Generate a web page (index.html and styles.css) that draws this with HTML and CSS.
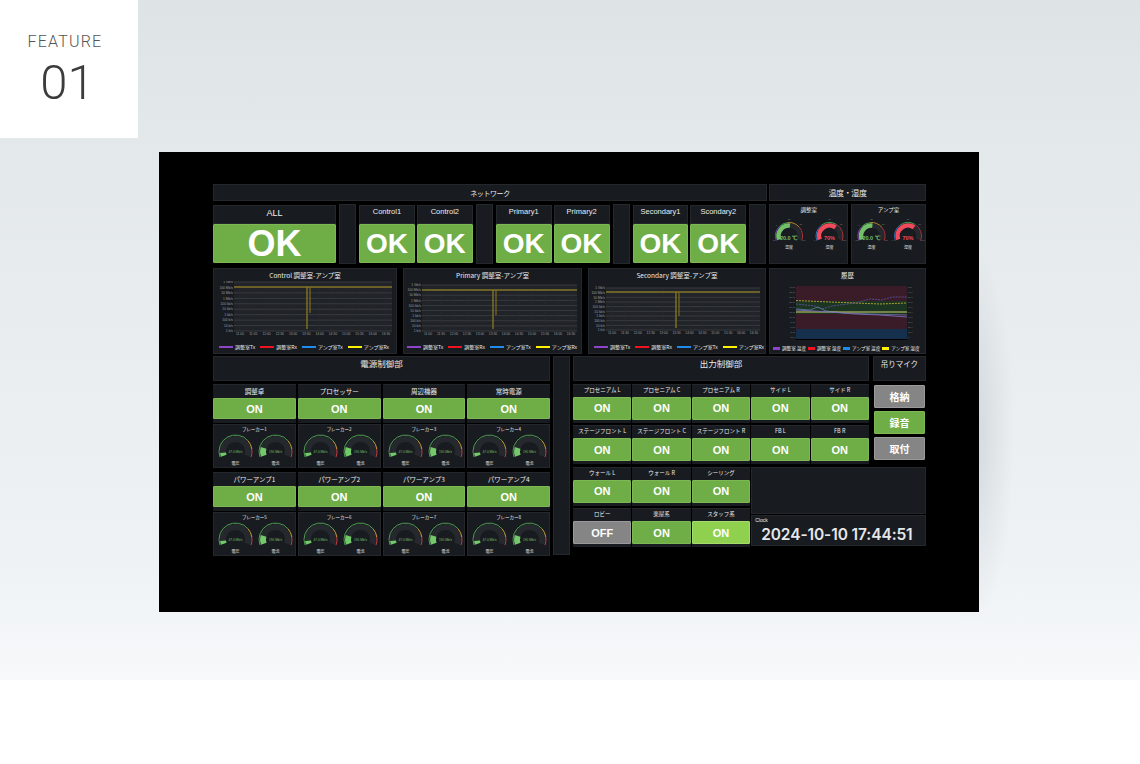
FILE: index.html
```html
<!DOCTYPE html>
<html lang="ja">
<head>
  <meta charset="UTF-8">
  <meta name="viewport" content="width=device-width, initial-scale=1.0">
  <title>Feature 01</title>
  <link rel="stylesheet" href="styles.css">
</head>
<body>
  <section class="hero">
    <div class="feature">
      <p class="feature-label">FEATURE</p>
      <p class="feature-num">01</p>
    </div>

    <div class="screen">
      <div class="board">

        <div class="row row-heads">
          <div class="panel head head-net">ネットワーク</div>
          <div class="panel head head-temp">温度・湿度</div>
        </div>

        <div class="row row-net">
          <div class="status status-all">
            <div class="panel status-name">ALL</div>
            <div class="ok">OK</div>
          </div>
          <div class="panel spacer"></div>
          <div class="net-group">
            <div class="status">
              <div class="panel status-name">Control1</div>
              <div class="ok">OK</div>
            </div>
            <div class="status">
              <div class="panel status-name">Control2</div>
              <div class="ok">OK</div>
            </div>
          </div>
          <div class="panel spacer"></div>
          <div class="net-group">
            <div class="status">
              <div class="panel status-name">Primary1</div>
              <div class="ok">OK</div>
            </div>
            <div class="status">
              <div class="panel status-name">Primary2</div>
              <div class="ok">OK</div>
            </div>
          </div>
          <div class="panel spacer"></div>
          <div class="net-group">
            <div class="status">
              <div class="panel status-name">Secondary1</div>
              <div class="ok">OK</div>
            </div>
            <div class="status">
              <div class="panel status-name">Scondary2</div>
              <div class="ok">OK</div>
            </div>
          </div>
          <div class="panel spacer"></div>
          <div class="panel climate climate-a">
            <p class="climate-title">調整室</p>
            <svg class="climate-svg" data-left="19" data-right="59.5"></svg>
          </div>
          <div class="panel climate climate-b">
            <p class="climate-title">アンプ室</p>
            <svg class="climate-svg" data-left="19.5" data-right="56"></svg>
          </div>
        </div>

        <div class="row row-charts">
          <div class="chart-group">
            <div class="panel chart chart-control">
              <p class="chart-title">Control 調整室-アンプ室</p>
              <svg class="plot" data-x0="20" data-x1="178" data-top="1" data-line="6" data-bottom="50" data-s1="93" data-s2="96" data-s2y="32"></svg>
              <div class="legend">
                <span class="key key-purple">調整室Tx</span>
                <span class="key key-red">調整室Rx</span>
                <span class="key key-blue">アンプ室Tx</span>
                <span class="key key-yellow">アンプ室Rx</span>
              </div>
            </div>
            <div class="panel chart chart-primary">
              <p class="chart-title">Primary 調整室-アンプ室</p>
              <svg class="plot" data-x0="18" data-x1="173" data-top="4" data-line="9" data-bottom="50" data-s1="89" data-s2="92" data-s2y="34"></svg>
              <div class="legend">
                <span class="key key-purple">調整室Tx</span>
                <span class="key key-red">調整室Rx</span>
                <span class="key key-blue">アンプ室Tx</span>
                <span class="key key-yellow">アンプ室Rx</span>
              </div>
            </div>
            <div class="panel chart chart-secondary">
              <p class="chart-title">Secondary 調整室-アンプ室</p>
              <svg class="plot" data-x0="17" data-x1="171" data-top="7" data-line="11" data-bottom="49" data-s1="87" data-s2="90" data-s2y="35"></svg>
              <div class="legend">
                <span class="key key-purple">調整室Tx</span>
                <span class="key key-red">調整室Rx</span>
                <span class="key key-blue">アンプ室Tx</span>
                <span class="key key-yellow">アンプ室Rx</span>
              </div>
            </div>
          </div>
          <div class="panel chart chart-history">
            <p class="chart-title">履歴</p>
            <svg class="history-plot" viewBox="0 0 155 60">
              <rect x="26" y="5" width="111" height="53" fill="#111316"/>
              <rect x="26" y="5" width="111" height="15" fill="#3a1c28"/>
              <rect x="26" y="20" width="111" height="13" fill="#1c3522"/>
              <rect x="26" y="33" width="111" height="15" fill="#3a1c28"/>
              <rect x="26" y="48" width="111" height="10" fill="#14304c"/>
              <path d="M26 58.500H137" stroke="#000" stroke-width="1"/>
              <path d="M26 19.500L60 21L85 22L110 23L137 22" fill="none" stroke="#a89e2e" stroke-width="1" stroke-dasharray="2 1"/>
              <path d="M26 23L45 25L52 28L62 25L85 22L100 18L112 19L122 16L137 16" fill="none" stroke="#5a4f94" stroke-width="0.900" stroke-dasharray="2 1"/>
              <path d="M26 28L40 29L48 26L56 30L75 32L100 33L137 34" fill="none" stroke="#5f7da8" stroke-width="0.800"/>
              <path d="M26 31H60L90 31H137" fill="none" stroke="#cfcf6a" stroke-width="1"/>
              <path d="M26 29L60 31L85 33L110 34L137 36" fill="none" stroke="#7a6bb4" stroke-width="0.900"/>
              <g class="tick tick-fine" text-anchor="end">
                <text x="25" y="7">40.00</text><text x="25" y="12">35.00</text><text x="25" y="17">30.00</text><text x="25" y="22">25.00</text>
                <text x="25" y="27">20.00</text><text x="25" y="32">15.00</text><text x="25" y="37">10.00</text><text x="25" y="42">5.00</text>
                <text x="25" y="47">0.00</text><text x="25" y="52">-5.00</text><text x="25" y="57">-10.0</text>
              </g>
              <g class="tick tick-fine">
                <text x="138" y="7">100</text><text x="138" y="12">90.0</text><text x="138" y="17">80.0</text><text x="138" y="22">70.0</text>
                <text x="138" y="27">60.0</text><text x="138" y="32">50.0</text><text x="138" y="37">40.0</text><text x="138" y="42">30.0</text>
                <text x="138" y="47">20.0</text><text x="138" y="52">10.0</text><text x="138" y="57">0</text>
              </g>
            </svg>
            <div class="legend legend-history">
              <span class="key key-purple">調整室 温度</span>
              <span class="key key-red">調整室 湿度</span>
              <span class="key key-blue">アンプ室 温度</span>
              <span class="key key-yellow">アンプ室 湿度</span>
            </div>
          </div>
        </div>

        <div class="row row-control">
          <div class="power">
            <div class="panel section-title power-title">電源制御部</div>
            <div class="power-cell">
              <div class="panel switch"><p class="switch-name">調整卓</p><div class="btn on">ON</div></div>
              <div class="panel breaker"><p class="breaker-name">ブレーカー1</p><svg class="breaker-svg"></svg></div>
            </div>
            <div class="power-cell">
              <div class="panel switch"><p class="switch-name">プロセッサー</p><div class="btn on">ON</div></div>
              <div class="panel breaker"><p class="breaker-name">ブレーカー2</p><svg class="breaker-svg"></svg></div>
            </div>
            <div class="power-cell">
              <div class="panel switch"><p class="switch-name">周辺機器</p><div class="btn on">ON</div></div>
              <div class="panel breaker"><p class="breaker-name">ブレーカー3</p><svg class="breaker-svg"></svg></div>
            </div>
            <div class="power-cell">
              <div class="panel switch"><p class="switch-name">常時電源</p><div class="btn on">ON</div></div>
              <div class="panel breaker"><p class="breaker-name">ブレーカー4</p><svg class="breaker-svg"></svg></div>
            </div>
            <div class="power-cell">
              <div class="panel switch"><p class="switch-name">パワーアンプ1</p><div class="btn on">ON</div></div>
              <div class="panel breaker"><p class="breaker-name">ブレーカー5</p><svg class="breaker-svg"></svg></div>
            </div>
            <div class="power-cell">
              <div class="panel switch"><p class="switch-name">パワーアンプ2</p><div class="btn on">ON</div></div>
              <div class="panel breaker"><p class="breaker-name">ブレーカー6</p><svg class="breaker-svg"></svg></div>
            </div>
            <div class="power-cell">
              <div class="panel switch"><p class="switch-name">パワーアンプ3</p><div class="btn on">ON</div></div>
              <div class="panel breaker"><p class="breaker-name">ブレーカー7</p><svg class="breaker-svg"></svg></div>
            </div>
            <div class="power-cell">
              <div class="panel switch"><p class="switch-name">パワーアンプ4</p><div class="btn on">ON</div></div>
              <div class="panel breaker"><p class="breaker-name">ブレーカー8</p><svg class="breaker-svg"></svg></div>
            </div>
          </div>

          <div class="panel spacer"></div>

          <div class="output">
            <div class="panel section-title output-title">出力制御部</div>
            <div class="panel section-title mic-title">吊りマイク</div>

            <div class="panel switch small"><p class="switch-name">プロセニアム L</p><div class="btn on">ON</div></div>
            <div class="panel switch small"><p class="switch-name">プロセニアム C</p><div class="btn on">ON</div></div>
            <div class="panel switch small"><p class="switch-name">プロセニアム R</p><div class="btn on">ON</div></div>
            <div class="panel switch small"><p class="switch-name">サイド L</p><div class="btn on">ON</div></div>
            <div class="panel switch small"><p class="switch-name">サイド R</p><div class="btn on">ON</div></div>

            <div class="mic">
              <div class="btn mic-btn off">格納</div>
              <div class="btn mic-btn on">録音</div>
              <div class="btn mic-btn off">取付</div>
            </div>

            <div class="panel switch small"><p class="switch-name">ステージフロント L</p><div class="btn on">ON</div></div>
            <div class="panel switch small"><p class="switch-name">ステージフロント C</p><div class="btn on">ON</div></div>
            <div class="panel switch small"><p class="switch-name">ステージフロント R</p><div class="btn on">ON</div></div>
            <div class="panel switch small"><p class="switch-name">FB L</p><div class="btn on">ON</div></div>
            <div class="panel switch small"><p class="switch-name">FB R</p><div class="btn on">ON</div></div>

            <div class="panel switch small"><p class="switch-name">ウォール L</p><div class="btn on">ON</div></div>
            <div class="panel switch small"><p class="switch-name">ウォール R</p><div class="btn on">ON</div></div>
            <div class="panel switch small"><p class="switch-name">シーリング</p><div class="btn on">ON</div></div>

            <div class="side">
              <div class="panel side-blank"></div>
              <div class="panel clock">
                <p class="clock-name">Clock</p>
                <p class="clock-time">2024-10-10 17:44:51</p>
              </div>
            </div>

            <div class="panel switch small"><p class="switch-name">ロビー</p><div class="btn off">OFF</div></div>
            <div class="panel switch small"><p class="switch-name">楽屋系</p><div class="btn on">ON</div></div>
            <div class="panel switch small"><p class="switch-name">スタッフ系</p><div class="btn bright">ON</div></div>
          </div>
        </div>

      </div>
    </div>
  </section>

  <script src="gauges.js"></script>
</body>
</html>
```

FILE: styles.css
```css
* {
  box-sizing: border-box;
}

body {
  margin: 0;
  background-color: #fff;
  font-family: "Noto Sans CJK JP", "Liberation Sans", sans-serif;
}

p {
  margin: 0;
}

/* page */
.hero {
  position: relative;
  height: 680px;
  padding: 152px 0 0 159px;
  background:
    radial-gradient(ellipse 42px 190px at 972px 435px, rgba(120, 130, 140, 0.22), rgba(120, 130, 140, 0)),
    linear-gradient(180deg, #dee3e6 0, #e3e8eb 140px, #e9edf0 350px, #eef2f5 560px, #f7f9fa 680px);
}

.feature {
  position: absolute;
  top: 0;
  left: 0;
  width: 138px;
  height: 138px;
  padding: 33px 8px 0 0;
  background-color: #fff;
  text-align: center;
  font-family: Roboto, sans-serif;
  font-weight: 300;
  color: #3c3c3c;
}

.feature-label {
  font-size: 16px;
  line-height: 18px;
  letter-spacing: 1.200px;
  color: #555;
}

.feature-num {
  margin-top: 4px;
  padding-left: 5px;
  font-size: 49px;
  line-height: 56px;
}

.screen {
  width: 820px;
  height: 460px;
  padding: 32px 0 0 54px;
  background-color: #000;
}

.board {
  width: 713px;
}

.row {
  display: flex;
}

.panel {
  background-color: #181b1f;
  border: 1px solid #24272c;
  color: #eceded;
}

/* headers */
.row-heads {
  gap: 2px;
  height: 17px;
}

.head {
  display: flex;
  align-items: center;
  justify-content: center;
  font-size: 7px;
  letter-spacing: -0.400px;
}

.head-net {
  width: 554px;
}

.head-temp {
  width: 157px;
  font-size: 8px;
}

/* network row */
.row-net {
  gap: 3px;
  height: 60px;
  margin-top: 3px;
}

.spacer {
  width: 17px;
  flex: none;
}

.net-group {
  display: flex;
  gap: 2px;
  width: 114px;
}

.status {
  flex: 1;
  display: flex;
  flex-direction: column;
  padding-top: 1px;
}

.status-all {
  flex: none;
  width: 123px;
}

.status-name {
  height: 19px;
  text-align: center;
  font-family: "Liberation Sans", sans-serif;
  font-size: 7.500px;
  line-height: 12px;
}

.status-all .status-name {
  font-size: 9px;
  line-height: 14px;
}

.ok {
  flex: 1;
  margin-bottom: 1px;
  background-color: #6fad47;
  border: 1px solid #7db855;
  border-radius: 1px;
  text-align: center;
  font-family: "Liberation Sans", sans-serif;
  font-weight: 700;
  font-size: 28px;
  line-height: 37px;
  color: #fff;
}

.status-all .ok {
  font-size: 36px;
}

/* climate */
.climate {
  text-align: center;
}

.climate-a {
  width: 79px;
}

.climate-b {
  width: 75px;
}

.climate-title {
  padding-top: 1px;
  font-size: 5.500px;
  line-height: 9px;
}

.climate-svg {
  display: block;
  width: 100%;
  height: 46px;
}

.climate-value {
  font-family: "Liberation Sans", sans-serif;
  font-size: 5.500px;
  font-weight: 700;
}

.climate-ok {
  fill: #73bf69;
}

.climate-hot {
  fill: #f2495c;
}

.gauge-value {
  font-family: "Liberation Sans", sans-serif;
  font-size: 3.200px;
  fill: #73bf69;
}

.gauge-name {
  font-size: 4px;
  fill: #e6e7e8;
}

/* charts */
.row-charts {
  gap: 3px;
  height: 86px;
  margin-top: 4px;
}

.chart-group {
  display: flex;
  gap: 6px;
}

.chart {
  display: flex;
  flex-direction: column;
  align-items: center;
}

.chart-control {
  width: 184px;
}

.chart-primary {
  width: 179px;
}

.chart-secondary {
  width: 178px;
}

.chart-history {
  width: 157px;
}

.chart-title {
  width: 100%;
  text-align: center;
  font-size: 6.500px;
  line-height: 12px;
}

.plot {
  display: block;
  flex: none;
  width: 100%;
  height: 55px;
}

.tick {
  font-family: "Liberation Sans", sans-serif;
  font-size: 3.300px;
  fill: #9a9da1;
}

.tick-fine {
  font-size: 2.300px;
  fill: #7d8084;
}

.legend {
  display: flex;
  gap: 5px;
  width: 100%;
  margin-top: auto;
  margin-bottom: 2px;
  padding-left: 5px;
  font-size: 5px;
  line-height: 9px;
}

.chart-primary .legend {
  padding-left: 3px;
}

.key {
  display: flex;
  align-items: center;
  gap: 2px;
  white-space: nowrap;
}

.key::before {
  content: "";
  width: 14px;
  height: 2px;
}

.key-purple::before {
  background-color: #8e44c9;
}

.key-red::before {
  background-color: #f2121f;
}

.key-blue::before {
  background-color: #1f8bea;
}

.key-yellow::before {
  background-color: #fff200;
}

.history-plot {
  display: block;
  flex: none;
  width: 155px;
  height: 60px;
}

.legend-history {
  gap: 2px;
  padding-left: 3px;
  margin-bottom: 0;
  font-size: 4.600px;
}

.legend-history .key::before {
  width: 7px;
  height: 2.500px;
}

/* control area */
.row-control {
  gap: 3px;
  height: 201px;
  margin-top: 2px;
}

.row-control > .spacer {
  height: 199px;
}

.section-title {
  text-align: center;
  font-size: 8.500px;
  line-height: 13px;
}

.power {
  display: grid;
  grid-template-columns: repeat(4, 1fr);
  grid-template-rows: 25px 85px 84px;
  gap: 3px 2px;
  width: 337px;
}

.power-title {
  grid-column: 1 / -1;
}

.power-cell {
  display: flex;
  flex-direction: column;
  gap: 1px;
}

.switch {
  display: flex;
  flex-direction: column;
  height: 39px;
  border-width: 1px 0 0;
}

.switch-name {
  height: 13px;
  text-align: center;
  font-size: 6.500px;
  line-height: 12px;
  white-space: nowrap;
}

.btn {
  display: flex;
  align-items: center;
  justify-content: center;
  font-family: "Liberation Sans", sans-serif;
  font-weight: 700;
  color: #fff;
  border-radius: 1px;
}

.switch .btn {
  height: 21px;
  font-size: 11px;
}

.on {
  background-color: #6fad47;
  border: 1px solid #7db855;
}

.off {
  background-color: #858585;
  border: 1px solid #9a9a9a;
}

.bright {
  background-color: #8fd14f;
  border: 1px solid #a3dc6a;
}

.breaker {
  height: 44px;
  text-align: center;
}

.breaker-name {
  padding-top: 1px;
  font-size: 4.500px;
  line-height: 7px;
}

.breaker-svg {
  display: block;
  width: 100%;
  height: 34px;
}

/* output */
.output {
  display: grid;
  grid-template-columns: repeat(5, 58.400px) 56px;
  grid-template-rows: 25px repeat(4, 39px);
  gap: 2.500px 1px;
  width: 353px;
}

.output-title {
  grid-column: 1 / 6;
}

.mic-title {
  margin-left: 3px;
  font-size: 7.500px;
}

.small .switch-name {
  height: 12px;
  font-size: 5.500px;
  line-height: 11px;
}

.small .btn {
  height: 23px;
}

.mic {
  grid-column: 6;
  grid-row: 2 / span 2;
  display: flex;
  flex-direction: column;
  gap: 2.500px;
  margin: 1px 1px 0 4px;
}

.mic-btn {
  height: 23.500px;
  font-family: "Noto Sans CJK JP", sans-serif;
  font-size: 10px;
}

.side {
  grid-column: 4 / -1;
  grid-row: 4 / span 2;
  display: flex;
  flex-direction: column;
  gap: 1px;
  height: 79px;
}

.side-blank {
  height: 47px;
}

.clock {
  height: 31px;
  padding-left: 3px;
}

.clock-name {
  font-family: "Liberation Sans", sans-serif;
  font-size: 5px;
  line-height: 9px;
}

.clock-time {
  padding-left: 6px;
  font-family: Inter, sans-serif;
  font-weight: 600;
  font-size: 15.500px;
  line-height: 19px;
  letter-spacing: -0.100px;
  white-space: nowrap;
  color: #e6e7ea;
}
```

FILE: gauges.js
```js
// angles in degrees, 0 = right, counter-clockwise
function point(cx, cy, r, deg) {
  const rad = deg * Math.PI / 180;
  return [(cx + r * Math.cos(rad)).toFixed(2), (cy - r * Math.sin(rad)).toFixed(2)];
}

function arc(cx, cy, r, from, to, color, width) {
  const [x0, y0] = point(cx, cy, r, from);
  const [x1, y1] = point(cx, cy, r, to);
  const large = from - to > 180 ? 1 : 0;
  return `<path d="M${x0} ${y0}A${r} ${r} 0 ${large} 1 ${x1} ${y1}" fill="none" stroke="${color}" stroke-width="${width}"/>`;
}

function breakerGauge(cx, cy, valueTo, value, name) {
  return arc(cx, cy, 12.5, 200, -20, "#25282d", 6)
    + arc(cx, cy, 12.5, 200, valueTo, "#73c96a", 6)
    + arc(cx, cy, 16.5, 200, 40, "#4c9a50", 1)
    + arc(cx, cy, 16.5, 40, 8, "#cf9c33", 1)
    + arc(cx, cy, 16.5, 8, -20, "#c93f4a", 1)
    + `<text class="gauge-value" x="${cx}" y="${cy + 1.5}" text-anchor="middle">${value}</text>`
    + `<text class="gauge-name" x="${cx}" y="${cy + 13}" text-anchor="middle">${name}</text>`;
}

function climateTicks(cx, cy, labels) {
  return labels.map(([deg, label]) => {
    const [x, y] = point(cx, cy, 16, deg);
    return `<text class="tick tick-fine" x="${x}" y="${y}" text-anchor="middle">${label}</text>`;
  }).join("");
}

function climateGauge(cx, cy, opts) {
  return arc(cx, cy, 10.5, 200, -20, "#25282d", 4.5)
    + arc(cx, cy, 10.5, 200, opts.to, opts.color, 4.5)
    + opts.bands.map(([from, to, color]) => arc(cx, cy, 13.5, from, to, color, 1)).join("")
    + climateTicks(cx, cy, opts.ticks)
    + `<text class="climate-value ${opts.cls}" x="${cx}" y="${cy + 4}" text-anchor="middle">${opts.value}</text>`
    + `<text class="gauge-name" x="${cx}" y="${cy + 13}" text-anchor="middle">${opts.name}</text>`;
}

function bandPlot(d) {
  const x0 = +d.x0, x1 = +d.x1, top = +d.top, bottom = +d.bottom;
  const rates = ["1 Gb/s", "100 Mb/s", "10 Mb/s", "1 Mb/s", "100 kb/s", "10 kb/s", "1 kb/s", "100 b/s", "10 b/s", "1 b/s"];
  const times = ["11:00", "11:30", "12:00", "12:30", "13:00", "13:30", "14:00", "14:30", "15:00", "15:30", "16:00", "16:30"];
  let out = `<rect x="${x0}" y="${top}" width="${x1 - x0}" height="${bottom - top}" fill="#202327"/>`;

  rates.forEach((label, i) => {
    const y = top + (bottom - top) * i / 9;
    out += `<path d="M${x0} ${y}H${x1}" stroke="#383b40" stroke-width="1"/>`;
    out += `<text class="tick" x="${x0 - 1}" y="${y + 1.2}" text-anchor="end">${label}</text>`;
  });
  times.forEach((label, i) => {
    const x = x0 + 6 + (x1 - x0 - 12) * i / 11;
    out += `<path d="M${x} ${top}V${bottom}" stroke="#2a2d31" stroke-width="0.5"/>`;
    out += `<text class="tick" x="${x}" y="${bottom + 3.800}" text-anchor="middle">${label}</text>`;
  });

  out += `<path d="M${x0} ${d.line}H${x1}" stroke="#6b6128" stroke-width="2"/>`;
  out += `<path d="M${d.s1} ${d.line}V${bottom - 2}" stroke="#94801f" stroke-width="1.200"/>`;
  out += `<path d="M${d.s2} ${d.line}V${d.s2y}" stroke="#7d6d20" stroke-width="1.200"/>`;
  return out;
}

document.querySelectorAll(".breaker-svg").forEach((svg) => {
  svg.innerHTML = breakerGauge(21.5, 18.5, 186, "47.0 Mb/s", "電圧")
    + breakerGauge(61.5, 18.5, 163, "190 Mb/s", "電流");
});

document.querySelectorAll(".climate-svg").forEach((svg) => {
  svg.innerHTML = climateGauge(+svg.dataset.left, 21, {
    to: 85,
    color: "#73bf69",
    cls: "climate-ok",
    value: "20.0 ℃",
    name: "温度",
    bands: [[200, 135, "#7b3fb0"], [135, 95, "#4c9a50"], [95, 40, "#b5862f"], [40, -20, "#a8343e"]],
    ticks: [[200, "-10"], [140, "0"], [90, "25"], [42, "30"], [-20, "50"]]
  }) + climateGauge(+svg.dataset.right, 21, {
    to: 55,
    color: "#f2495c",
    cls: "climate-hot",
    value: "70%",
    name: "湿度",
    bands: [[200, 125, "#2f6fb0"], [125, 60, "#4c9a50"], [60, -20, "#a8343e"]],
    ticks: [[200, "0"], [90, "50"], [42, "80"], [-20, "100"]]
  });
});

document.querySelectorAll(".plot").forEach((svg) => {
  svg.innerHTML = bandPlot(svg.dataset);
});
```
